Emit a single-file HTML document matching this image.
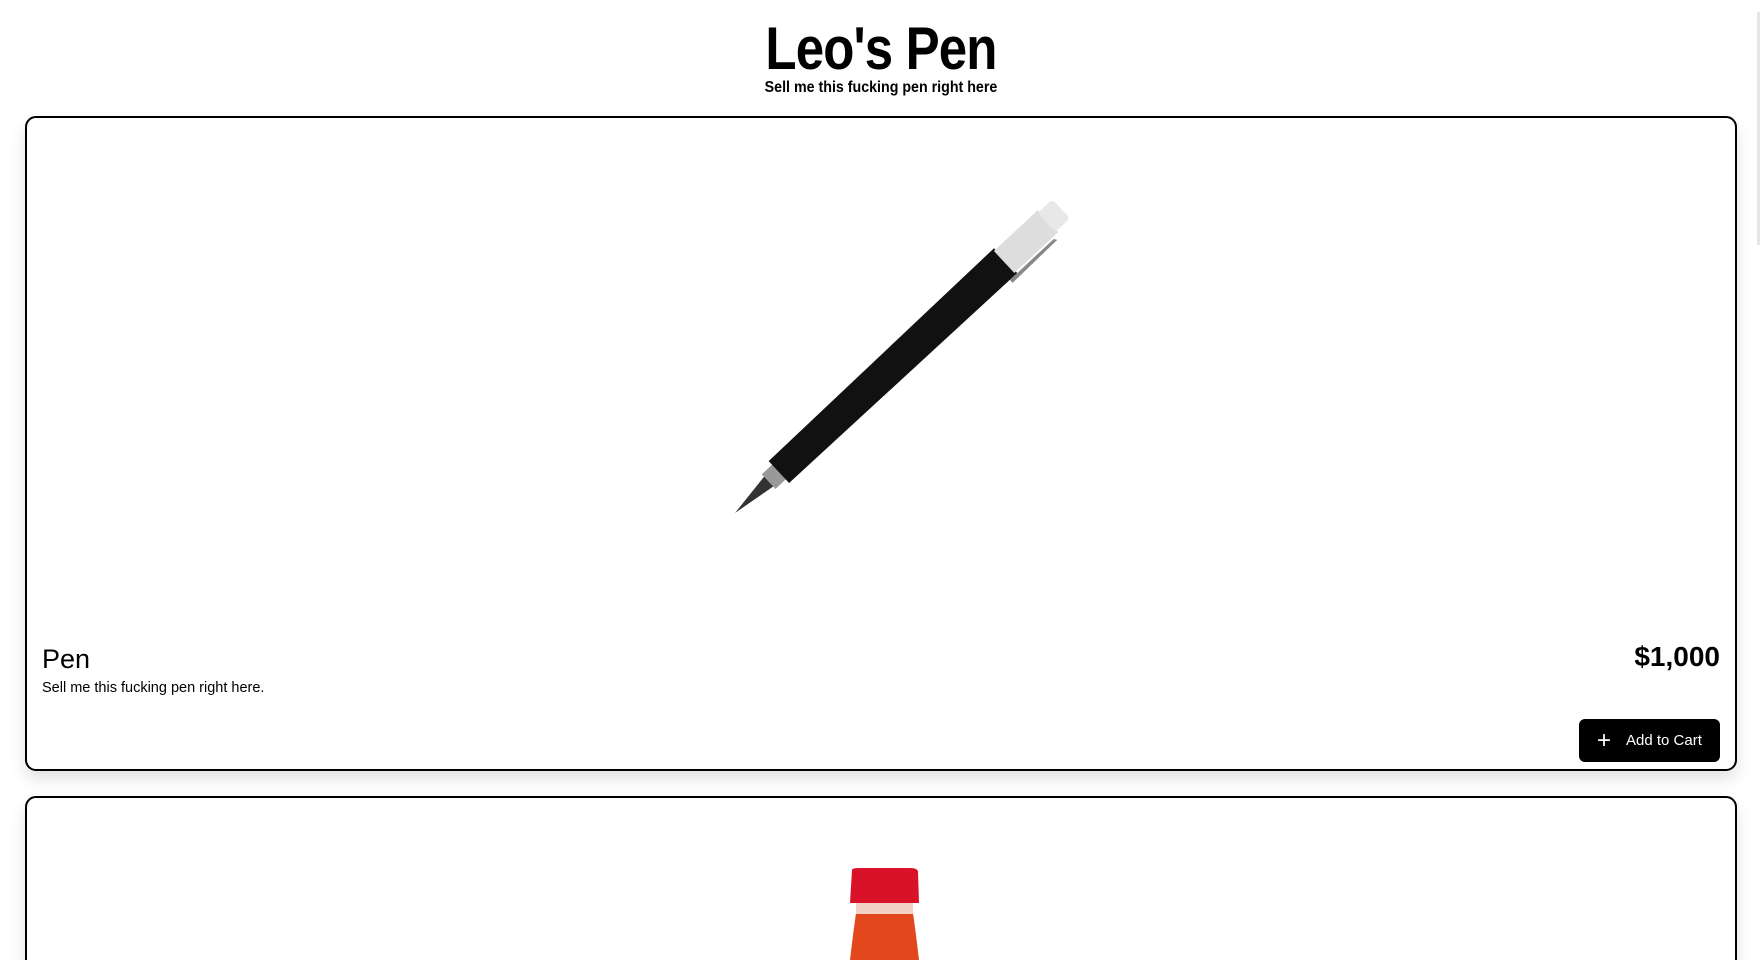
<!DOCTYPE html>
<html><head><style>
html,body{margin:0;padding:0;background:#fff;width:1762px;height:960px;overflow:hidden;font-family:"Liberation Sans",sans-serif;color:#000}
#wrap{position:relative;width:1762px;height:960px;overflow:hidden}
.h1{position:absolute;left:0;width:1762px;top:14px;text-align:center;font-weight:bold;font-size:60px;line-height:70px;letter-spacing:-1px;transform:scaleX(0.85)}
.sub{position:absolute;left:0;width:1762px;top:78px;text-align:center;font-weight:bold;font-size:16px;line-height:20px;transform:scaleX(0.89)}
.card{position:absolute;left:25px;width:1708px;border:2px solid #000;border-radius:11px;box-shadow:0 8px 16px rgba(0,0,0,0.12);background:#fff;overflow:hidden}
.name{position:absolute;left:15px;top:526px;font-size:27px}
.desc{position:absolute;left:15px;top:562px;font-size:14.5px}
.price{position:absolute;right:15px;top:523px;font-size:28px;font-weight:bold}
.btn{position:absolute;right:15px;top:601px;width:141px;height:43px;background:#000;color:#fff;border-radius:6px;font-size:15px;line-height:43px}
.sb{position:absolute;left:1757px;top:12px;width:3px;height:233px;background:#e6e6e6}
</style></head><body><div id="wrap">
<div class="h1">Leo's Pen</div>
<div class="sub">Sell me this fucking pen right here</div>
<div class="card" style="top:116px;height:651px">
<svg style="position:absolute;left:-27px;top:-118px" width="1762" height="700">
<g transform="translate(735,513) rotate(-43)">
<polygon points="0,0 48,-7 48,7" fill="#333"/>
<rect x="46" y="-10" width="16" height="20" fill="#999"/>
<path d="M60,-15 L370,-17 L370,17 L60,15 Z" fill="#111"/>
<rect x="368" y="-15" width="60" height="30" fill="#ddd"/>
<rect x="426" y="-13" width="20" height="26" rx="4" fill="#e8e8e8"/>
<path d="M360,17 L420,17 L422,20 L360,21 Z" fill="#888"/>
</g>
</svg>
<div class="name">Pen</div>
<div class="desc">Sell me this fucking pen right here.</div>
<div class="price">$1,000</div>
<div class="btn"><span style="position:absolute;left:18px;top:0;font-size:24px;font-weight:300">+</span><span style="position:absolute;left:47px">Add to Cart</span></div>
</div>
<div class="card" style="top:796px;height:300px">
<svg style="position:absolute;left:-27px;top:-798px" width="1762" height="960">
<path d="M856,913 L913,913 L916,935 L919,960 L850,960 L853,935 Z" fill="#e2481c"/>
<rect x="856" y="902" width="57" height="12" fill="#f1d2c4"/>
<path d="M852,870 Q852,868 860,868 L910,868 Q918,868 918,872 L919,903 L850,903 Z" fill="#d9122a"/>
</svg>
</div>
<div class="sb"></div>
</div></body></html>
